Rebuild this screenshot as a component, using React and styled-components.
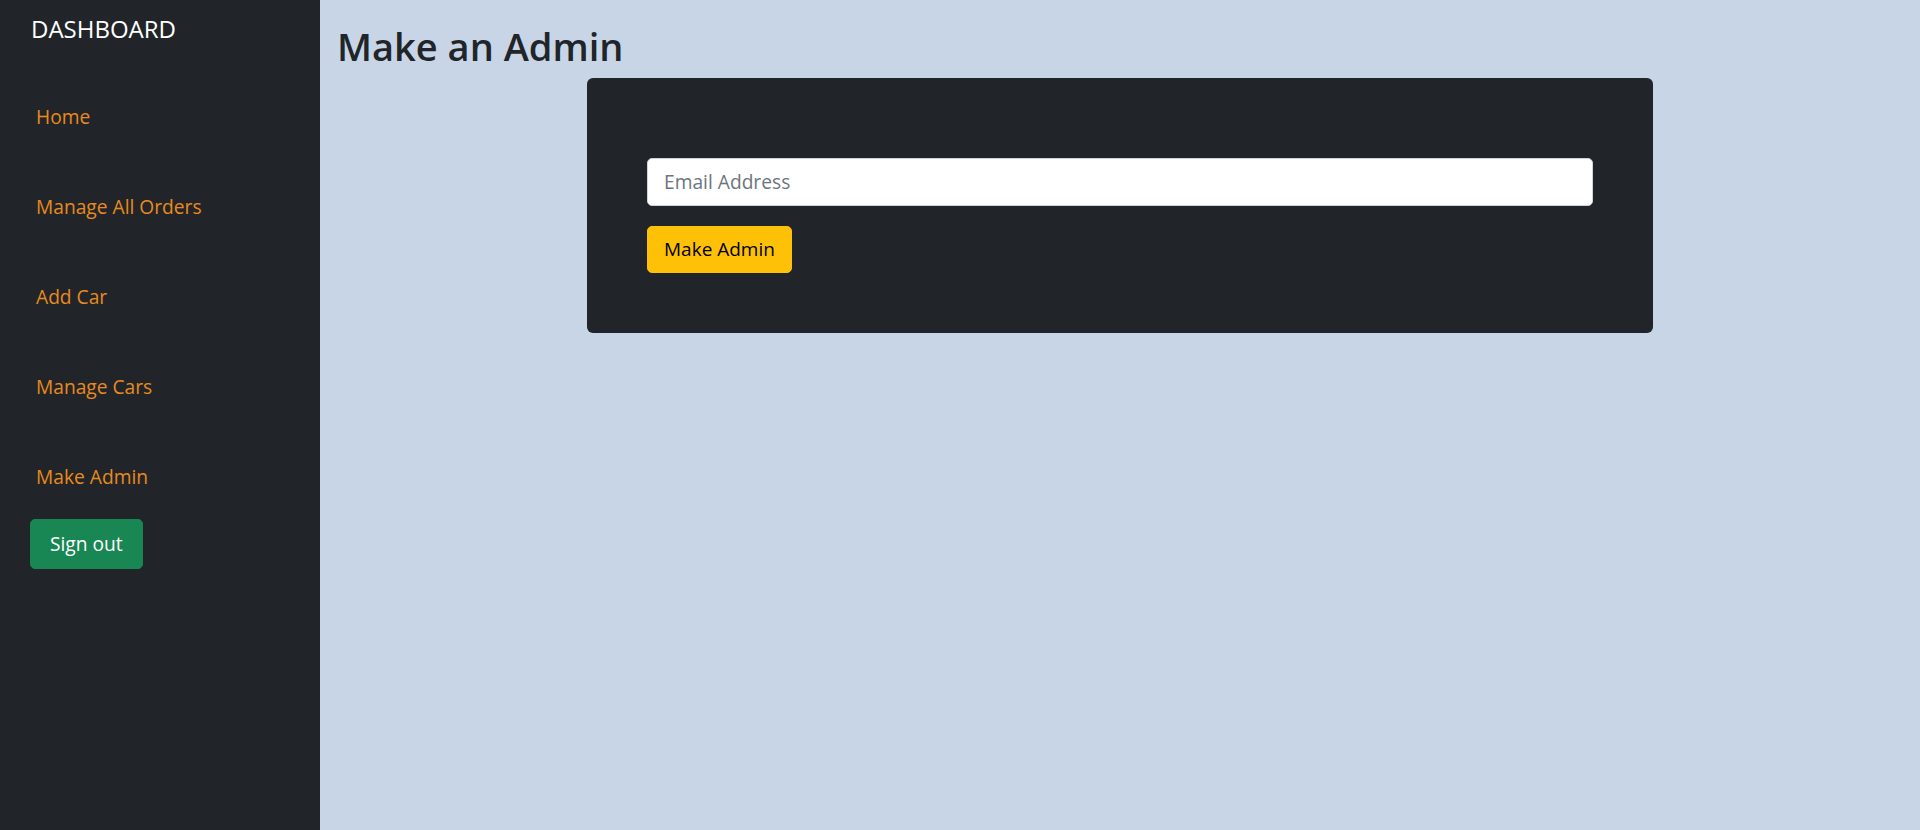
import styled, { createGlobalStyle } from "styled-components";

const GlobalStyle = createGlobalStyle`
    * {
        box-sizing: border-box;
    }

    body {
        margin: 0;
        font-family: "Open Sans", "Noto Sans", sans-serif;
        color: #212529;
        background-color: #c8d5e7;
    }
`;

const Layout = styled.div`
    display: grid;
    grid-template-columns: 320px 1fr;
    min-height: 100vh;
`;

const Sidebar = styled.aside`
    background-color: #212529;
    padding: 15px 30px 0 31px;
`;

const Brand = styled.h4`
    margin: 0;
    font-size: 24px;
    font-weight: 400;
    line-height: 1.2;
    color: #fff;
`;

const NavList = styled.ul`
    list-style: none;
    margin: 0;
    padding: 58px 0 0 5px;
    display: flex;
    flex-direction: column;
    gap: 60.6px;
`;

const NavLink = styled.a`
    display: block;
    font-size: 19.2px;
    line-height: 29.4px;
    color: #e88a1f;
    text-decoration: none;
    cursor: pointer;
`;

const SignOut = styled.button`
    margin-top: 28px;
    margin-left: -1px;
    padding: 9px 19px;
    font-family: inherit;
    font-size: 19.2px;
    line-height: 29.4px;
    color: #fff;
    background-color: #198754;
    border: 1px solid #198754;
    border-radius: 5px;
    cursor: pointer;
`;

const Main = styled.main`
    padding: 0 17px;
`;

const Title = styled.h1`
    margin: 0 0 8px;
    padding-top: 24px;
    font-size: 38px;
    font-weight: 600;
    line-height: 1.2;
`;

const Card = styled.div`
    width: 1066px;
    margin: 0 auto;
    background-color: #212529;
    border-radius: 6px;
    padding: 80px 60px 60px;
`;

const Form = styled.form`
    display: flex;
    flex-direction: column;
    align-items: flex-start;
    gap: 20px;
`;

const Input = styled.input`
    width: 100%;
    height: 48px;
    padding: 0 16px;
    font-family: inherit;
    font-size: 19.2px;
    color: #212529;
    background-color: #fff;
    border: 1px solid #ced4da;
    border-radius: 5px;
    outline: none;

    &::placeholder {
        color: #6c757d;
    }
`;

const SubmitButton = styled.button`
    height: 47px;
    padding: 0 16px;
    font-family: inherit;
    font-size: 19px;
    color: #000;
    background-color: #ffc107;
    border: 1px solid #ffc107;
    border-radius: 5px;
    cursor: pointer;
`;

const links = ["Home", "Manage All Orders", "Add Car", "Manage Cars", "Make Admin"];

export default function App() {
    return (
        <>
            <GlobalStyle />
            <Layout>
                <Sidebar>
                    <Brand>DASHBOARD</Brand>
                    <NavList>
                        {links.map((l) => (
                            <li key={l}>
                                <NavLink>{l}</NavLink>
                            </li>
                        ))}
                    </NavList>
                    <SignOut>Sign out</SignOut>
                </Sidebar>
                <Main>
                    <Title>Make an Admin</Title>
                    <Card>
                        <Form onSubmit={(e) => e.preventDefault()}>
                            <Input type="email" placeholder="Email Address" />
                            <SubmitButton type="submit">Make Admin</SubmitButton>
                        </Form>
                    </Card>
                </Main>
            </Layout>
        </>
    );
}
